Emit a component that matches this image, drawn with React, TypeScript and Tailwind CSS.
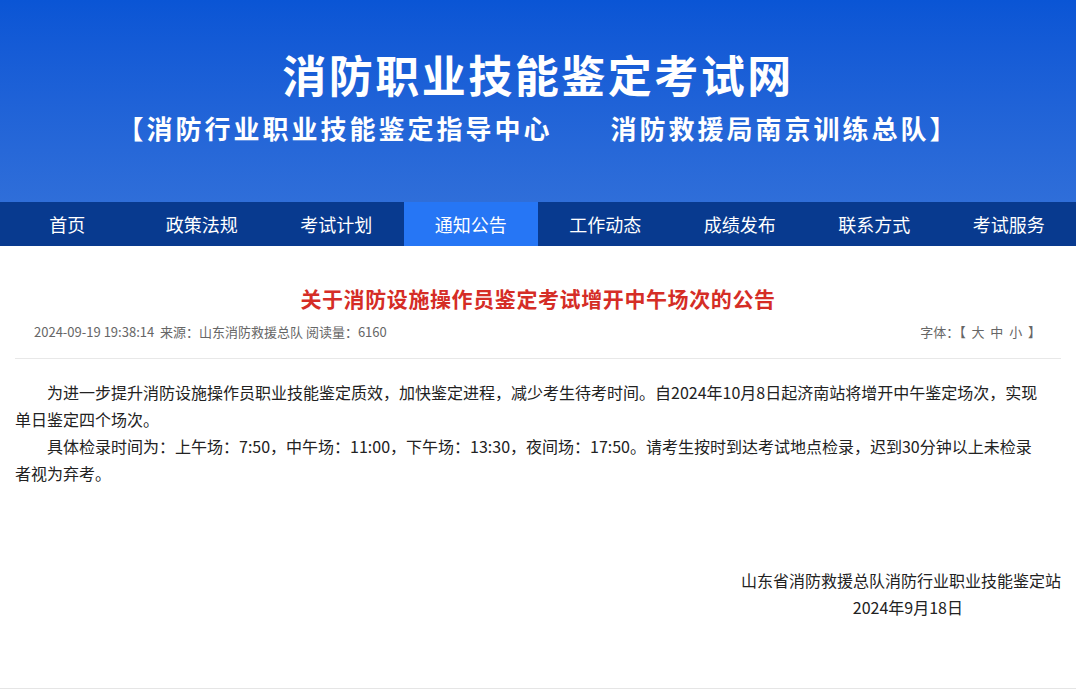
const navItems = ["首页", "政策法规", "考试计划", "通知公告", "工作动态", "成绩发布", "联系方式", "考试服务"];

const font = { fontFamily: '"Noto Sans CJK SC", "Noto Sans", sans-serif' };

function Header() {
  return (
    <div className="h-[202px] bg-gradient-to-b from-[#0a55d5] to-[#2f6ed9] flex flex-col items-center text-white">
      <h1 className="mt-[46px] text-[44px] leading-[56px] font-bold tracking-[2.5px]">消防职业技能鉴定考试网</h1>
      <p className="mt-[9px] text-[26px] leading-[34px] font-bold tracking-[3px] whitespace-pre">
        【消防行业职业技能鉴定指导中心<span className="inline-block w-[58px]" />消防救援局南京训练总队】
      </p>
    </div>
  );
}

function Nav() {
  return (
    <nav className="h-[44px] bg-[#083a8f] grid grid-cols-8">
      {navItems.map((item) => (
        <a
          key={item}
          className={
            item === "通知公告"
              ? "flex items-center justify-center bg-[#2676f5] text-white text-[18px]"
              : "flex items-center justify-center text-white text-[18px]"
          }
        >
          {item}
        </a>
      ))}
    </nav>
  );
}

function Article() {
  return (
    <div className="mx-[15px] h-[442px] flex flex-col">
      <h2 className="mt-[38px] text-center text-[21px] leading-[28px] font-bold tracking-[0.6px] text-[#d52d26]">
        关于消防设施操作员鉴定考试增开中午场次的公告
      </h2>
      <div className="mt-[10px] pl-[19px] pr-[20px] flex justify-between text-[13px] leading-[20px] text-[#666]">
        <span className="whitespace-pre">2024-09-19 19:38:14  来源：山东消防救援总队 阅读量：6160</span>
        <span className="whitespace-pre">字体：【  大  中  小  】</span>
      </div>
      <div className="mt-[16px] border-t border-[#e8e8e8]" />
      <div className="mt-[20px] pr-[20px] text-[16px] leading-[27px] text-[#222]">
        <p className="indent-[2em]">
          为进一步提升消防设施操作员职业技能鉴定质效，加快鉴定进程，减少考生待考时间。自2024年10月8日起济南站将增开中午鉴定场次，实现单日鉴定四个场次。
        </p>
        <p className="indent-[2em]">
          具体检录时间为：上午场：7:50，中午场：11:00，下午场：13:30，夜间场：17:50。请考生按时到达考试地点检录，迟到30分钟以上未检录者视为弃考。
        </p>
      </div>
      <div className="mt-[80px] flex flex-col items-end text-[16px] leading-[27px] text-[#222]">
        <p>山东省消防救援总队消防行业职业技能鉴定站</p>
        <p className="mr-[98px]">2024年9月18日</p>
      </div>
    </div>
  );
}

export default function App() {
  return (
    <div className="w-full min-h-[689px] bg-white" style={font}>
      <Header />
      <Nav />
      <Article />
      <div className="border-t border-[#e5e5e5]" />
    </div>
  );
}
